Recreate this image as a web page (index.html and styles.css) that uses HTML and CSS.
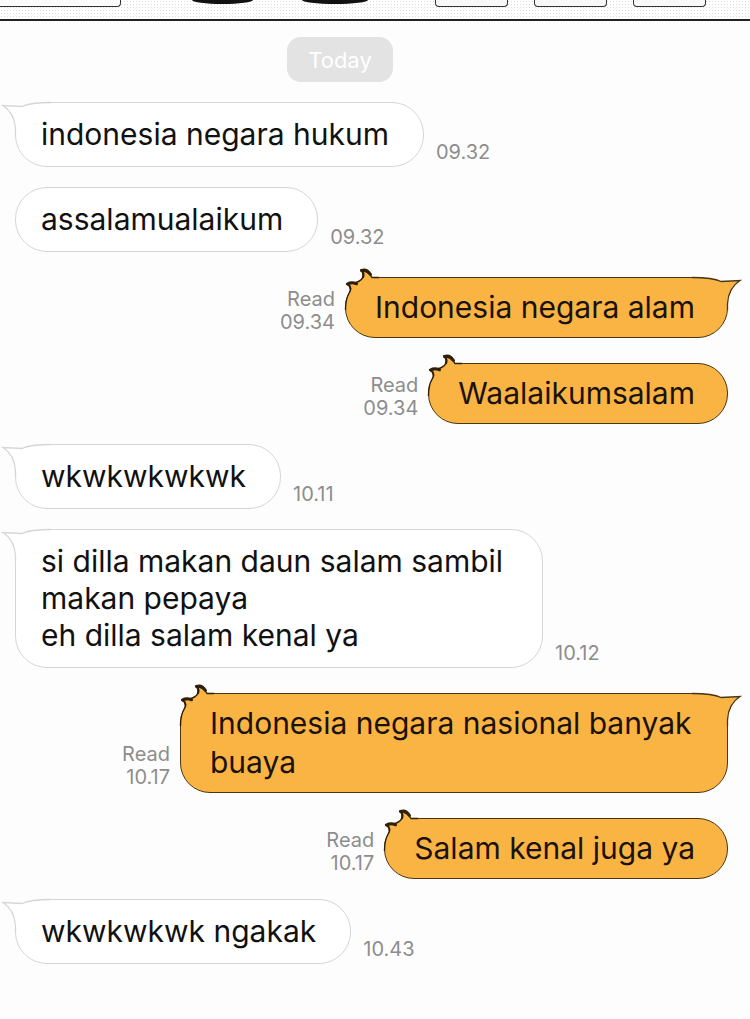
FILE: index.html
```html
<!DOCTYPE html>
<html lang="id">
<head>
    <meta charset="UTF-8">
    <meta name="viewport" content="width=device-width, initial-scale=1.0">
    <title>Chat</title>
    <link rel="stylesheet" href="styles.css">
</head>
<body>
    <svg class="defs" width="0" height="0" aria-hidden="true">
        <symbol id="tail" viewBox="0 0 50 34">
            <path d="M50,1.5 C36,1.5 27,2.5 21,5.5 L2,4.5 C9,9 14,16 14.5,28 L14.5,34 L50,34 Z" stroke="none"/>
            <path d="M50,1.5 C36,1.5 27,2.5 21,5.5 L2,4.5 C9,9 14,16 14.5,28 L14.5,34" fill="none" stroke-width="1.3"/>
        </symbol>
        <symbol id="ears" viewBox="0 0 44 44">
            <path d="M44,11.5 L37,11.5 C35,8 32,5 26.5,4.5 C30,8 28.5,13 23.5,15.5 C20.5,17 17,17.5 12.5,18 C15.5,20 16.5,23.5 14,27.5 C11.5,31.5 10.5,36 10.5,44 L44,44 Z" stroke="none"/>
            <path d="M44,11.5 L37,11.5 C35,8 32,5 26.5,4.5 C30,8 28.5,13 23.5,15.5 C20.5,17 17,17.5 12.5,18 C15.5,20 16.5,23.5 14,27.5 C11.5,31.5 10.5,36 10.5,44" fill="none" stroke-width="1.4"/>
            <path d="M26.5,4.5 C29.5,3.2 33,4.5 35.5,8.5" fill="none" stroke-width="3" stroke-linecap="round"/>
            <path d="M26.5,4.5 C28.5,6.5 29,8.5 28,11" fill="none" stroke-width="2.2" stroke-linecap="round"/>
            <path d="M12.5,18 C15,16.5 18.5,16.5 21.5,17.8" fill="none" stroke-width="3" stroke-linecap="round"/>
            <path d="M12.5,18 C14.5,19.5 15.5,21 15.5,23" fill="none" stroke-width="2" stroke-linecap="round"/>
        </symbol>
    </svg>

    <div class="topbar">
        <div class="tab"></div>
        <div class="blob blob-1"></div>
        <div class="blob blob-2"></div>
        <div class="box box-1"></div>
        <div class="box"></div>
        <div class="box"></div>
    </div>

    <div class="chat">
        <div class="date"><span>Today</span></div>

        <div class="row in">
            <div class="bubble">
                <svg class="tail"><use href="#tail"/></svg>
                indonesia negara hukum
            </div>
            <div class="time">09.32</div>
        </div>

        <div class="row in">
            <div class="bubble">assalamualaikum</div>
            <div class="time">09.32</div>
        </div>

        <div class="row out">
            <div class="meta">Read<br>09.34</div>
            <div class="bubble">
                <svg class="ears"><use href="#ears"/></svg>
                <svg class="tail"><use href="#tail"/></svg>
                Indonesia negara alam
            </div>
        </div>

        <div class="row out">
            <div class="meta">Read<br>09.34</div>
            <div class="bubble">
                <svg class="ears"><use href="#ears"/></svg>
                Waalaikumsalam
            </div>
        </div>

        <div class="row in">
            <div class="bubble">
                <svg class="tail"><use href="#tail"/></svg>
                wkwkwkwkwk
            </div>
            <div class="time">10.11</div>
        </div>

        <div class="row in">
            <div class="bubble">
                <svg class="tail"><use href="#tail"/></svg>
                si dilla makan daun salam sambil makan pepaya<br>eh dilla salam kenal ya
            </div>
            <div class="time">10.12</div>
        </div>

        <div class="row out">
            <div class="meta">Read<br>10.17</div>
            <div class="bubble">
                <svg class="ears"><use href="#ears"/></svg>
                <svg class="tail"><use href="#tail"/></svg>
                Indonesia negara nasional banyak buaya
            </div>
        </div>

        <div class="row out">
            <div class="meta">Read<br>10.17</div>
            <div class="bubble">
                <svg class="ears"><use href="#ears"/></svg>
                Salam kenal juga ya
            </div>
        </div>

        <div class="row in">
            <div class="bubble">
                <svg class="tail"><use href="#tail"/></svg>
                wkwkwkwk ngakak
            </div>
            <div class="time">10.43</div>
        </div>
    </div>
</body>
</html>
```

FILE: styles.css
```css
* {
    margin: 0;
    padding: 0;
    box-sizing: border-box;
}

body {
    font-family: Inter, "Liberation Sans", sans-serif;
    background: #fdfdfd;
    color: #111;
    width: 750px;
    min-height: 100vh;
}

.defs {
    position: absolute;
    width: 0;
    height: 0;
}

/* comic strip cut off at the top */
.topbar {
    height: 21px;
    border-bottom: 2px solid #222;
    background-color: #fff;
    background-image: radial-gradient(circle, #dcdcdc 0.6px, transparent 1px);
    background-size: 3px 3px;
    display: flex;
    align-items: flex-start;
}

.tab {
    width: 121px;
    height: 7px;
    background: #fbfbfb;
    border: 1px solid #333;
    border-top: none;
    border-left: none;
    border-radius: 0 0 4px 0;
}

.blob {
    height: 4px;
    background: #111;
    border-radius: 0 0 50% 50% / 0 0 100% 100%;
}

.blob-1 {
    width: 61px;
    margin-left: 71px;
}

.blob-2 {
    width: 66px;
    margin-left: 49px;
}

.box {
    width: 73px;
    height: 7px;
    margin-left: 26px;
    background: #f8f8f8;
    border: 1px solid #333;
    border-top: none;
    border-radius: 0 0 4px 4px;
}

.box-1 {
    margin-left: 67px;
}

.chat {
    padding-bottom: 40px;
}

.date {
    display: flex;
    justify-content: center;
    margin-top: 16px;
    padding-right: 70px;
}

.date span {
    width: 106px;
    height: 45px;
    border-radius: 14px;
    background: #e3e3e3;
    color: #fff;
    font-size: 22px;
    display: flex;
    align-items: center;
    justify-content: center;
}

.row {
    display: flex;
    align-items: flex-end;
}

.row.in {
    margin-top: 20px;
    padding-left: 15px;
}

.row.out {
    margin-top: 25px;
    padding-right: 22px;
    justify-content: flex-end;
}

.bubble {
    position: relative;
    z-index: 0;
    font-size: 30px;
}

.in .bubble {
    background: #fff;
    border: 1px solid #d6d6d6;
    border-radius: 32px;
    padding: 13px 34px 13px 25px;
    line-height: 37px;
    max-width: 528px;
}

.out .bubble {
    background: #fab444;
    color: #1a1208;
    border: 1px solid #4a3510;
    border-radius: 30px;
    padding: 10px 32px 10px 29px;
    line-height: 39px;
    max-width: 548px;
}

/* tails and ears sit over the border, under the text */
.tail,
.ears {
    position: absolute;
    z-index: -1;
    overflow: visible;
}

.tail {
    top: -2px;
    width: 50px;
    height: 34px;
}

.in .tail {
    left: -15px;
    fill: #fff;
    stroke: #d6d6d6;
}

.out .tail {
    right: -15px;
    transform: scaleX(-1);
    fill: #fab444;
    stroke: #4a3510;
}

.ears {
    left: -11px;
    top: -12px;
    width: 44px;
    height: 44px;
    fill: #fab444;
    stroke: #2e2008;
}

.time,
.meta {
    font-size: 20px;
    line-height: 23px;
    color: #8d8d8d;
}

.time {
    margin-left: 12px;
    margin-bottom: 3px;
}

.meta {
    text-align: right;
    margin-right: 10px;
    margin-bottom: 4px;
}
```
